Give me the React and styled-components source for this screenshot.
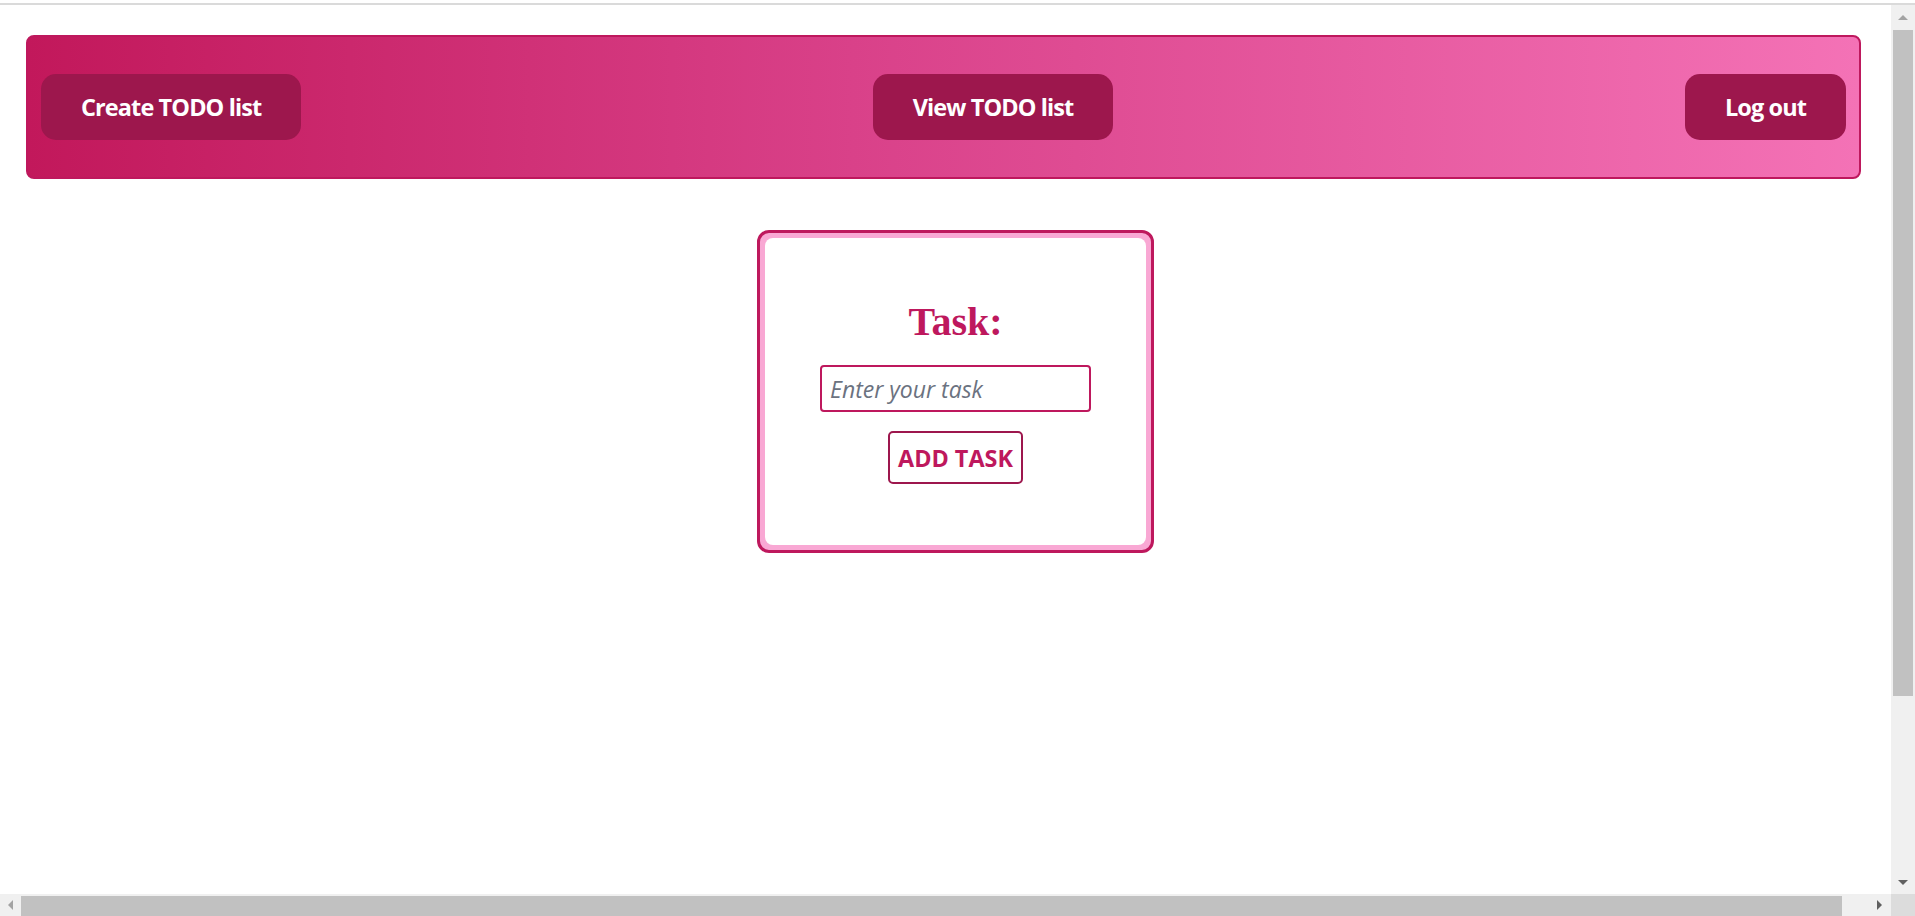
import React, { useState } from "react";
import styled, { createGlobalStyle, css } from "styled-components";

const GlobalStyle = createGlobalStyle`
  html, body {
    margin: 0;
    padding: 0;
    background: #ffffff;
    overflow: hidden;
  }
  body {
    font-family: "Open Sans", "Noto Sans", "Liberation Sans", sans-serif;
  }
  * {
    box-sizing: border-box;
  }
`;

const Page = styled.div`
  width: 1915px;
  height: 916px;
  display: flex;
  flex-direction: column;
`;

const TopRule = styled.div`
  height: 5px;
  flex-shrink: 0;
  border-bottom: 2px solid #dadada;
`;

const Header = styled.header`
  width: 1835px;
  height: 144px;
  flex-shrink: 0;
  margin: 30px 0 0 26px;
  padding: 0 13px;
  display: flex;
  align-items: center;
  justify-content: space-between;
  border: 2px solid #be185d;
  border-radius: 8px;
  background: linear-gradient(to right, #c2185b, #d94189 45%, #f472b6);
`;

const NavButton = styled.button`
  height: 66px;
  padding: 0 40px;
  border: none;
  border-radius: 15px;
  background: #9d174d;
  color: #ffffff;
  font-family: "Open Sans", "Noto Sans", sans-serif;
  font-size: 23.5px;
  font-weight: 700;
  letter-spacing: -0.9px;
  cursor: pointer;
`;

const Main = styled.main`
  width: 1835px;
  margin: 51px 0 0 26px;
  padding-left: 24px;
  display: flex;
  justify-content: center;
`;

const Card = styled.section`
  width: 397px;
  height: 323px;
  padding: 5px;
  border: 3px solid #be185d;
  border-radius: 12px;
  background: #f9a8d4;
`;

const CardInner = styled.div`
  height: 100%;
  display: flex;
  flex-direction: column;
  align-items: center;
  justify-content: center;
  border-radius: 8px;
  background: #ffffff;
`;

const Title = styled.h2`
  margin: 0;
  height: 46px;
  line-height: 46px;
  font-family: "Liberation Serif", "Times New Roman", serif;
  font-size: 40px;
  font-weight: 700;
  color: #be185d;
`;

const TaskInput = styled.input`
  margin-top: 20px;
  width: 271px;
  height: 47px;
  padding: 0 8px;
  border: 2px solid #be185d;
  border-radius: 4px;
  outline: none;
  font-family: "Open Sans", "Noto Sans", sans-serif;
  font-size: 23px;
  font-style: italic;
  color: #374151;
  &::placeholder {
    color: #6b7280;
    font-style: italic;
  }
`;

const AddButton = styled.button`
  margin-top: 19px;
  height: 53px;
  padding: 0 8px;
  border: 2px solid #9d174d;
  border-radius: 5px;
  background: #ffffff;
  color: #be185d;
  font-family: "Open Sans", "Noto Sans", sans-serif;
  font-size: 23.4px;
  font-weight: 700;
  cursor: pointer;
`;

/* window scrollbars, drawn over the page */
const VScroll = styled.div`
  position: fixed;
  top: 5px;
  right: 0;
  bottom: 22px;
  width: 24px;
  display: flex;
  flex-direction: column;
  background: #f0f0f0;
`;

const HScroll = styled.div`
  position: fixed;
  left: 0;
  right: 24px;
  bottom: 0;
  height: 22px;
  display: flex;
  background: #f0f0f0;
`;

const Corner = styled.div`
  position: fixed;
  right: 0;
  bottom: 0;
  width: 24px;
  height: 22px;
  background: #dcdcdc;
`;

const ArrowBox = styled.div`
  flex: 0 0 ${(p) => p.$size}px;
  display: flex;
  align-items: center;
  justify-content: center;
`;

const Arrow = styled.span`
  width: 0;
  height: 0;
  ${(p) =>
    p.$dir === "up" &&
    css`
      border-left: 5px solid transparent;
      border-right: 5px solid transparent;
      border-bottom: 5px solid ${p.$muted ? "#a3a3a3" : "#606060"};
    `}
  ${(p) =>
    p.$dir === "down" &&
    css`
      border-left: 5px solid transparent;
      border-right: 5px solid transparent;
      border-top: 5px solid ${p.$muted ? "#a3a3a3" : "#606060"};
    `}
  ${(p) =>
    p.$dir === "left" &&
    css`
      border-top: 5px solid transparent;
      border-bottom: 5px solid transparent;
      border-right: 5px solid ${p.$muted ? "#a3a3a3" : "#606060"};
    `}
  ${(p) =>
    p.$dir === "right" &&
    css`
      border-top: 5px solid transparent;
      border-bottom: 5px solid transparent;
      border-left: 5px solid ${p.$muted ? "#a3a3a3" : "#606060"};
    `}
`;

const Track = styled.div`
  flex: 1;
  display: flex;
  flex-direction: ${(p) => (p.$vertical ? "column" : "row")};
  padding: ${(p) => (p.$vertical ? "0 2px" : "2px 0 0")};
`;

const Thumb = styled.div`
  flex: 0 0 ${(p) => p.$length}px;
  background: #c1c1c1;
`;

export default function App() {
  const [task, setTask] = useState("");

  return (
    <>
      <GlobalStyle />
      <Page>
        <TopRule />
        <Header>
          <NavButton>Create TODO list</NavButton>
          <NavButton>View TODO list</NavButton>
          <NavButton>Log out</NavButton>
        </Header>
        <Main>
          <Card>
            <CardInner>
              <Title>Task:</Title>
              <TaskInput
                value={task}
                placeholder="Enter your task"
                onChange={(e) => setTask(e.target.value)}
              />
              <AddButton>ADD TASK</AddButton>
            </CardInner>
          </Card>
        </Main>
      </Page>

      <VScroll>
        <ArrowBox $size={25}>
          <Arrow $dir="up" $muted />
        </ArrowBox>
        <Track $vertical>
          <Thumb $length={666} />
        </Track>
        <ArrowBox $size={24}>
          <Arrow $dir="down" />
        </ArrowBox>
      </VScroll>
      <HScroll>
        <ArrowBox $size={21}>
          <Arrow $dir="left" $muted />
        </ArrowBox>
        <Track>
          <Thumb $length={1821} />
        </Track>
        <ArrowBox $size={24}>
          <Arrow $dir="right" />
        </ArrowBox>
      </HScroll>
      <Corner />
    </>
  );
}
